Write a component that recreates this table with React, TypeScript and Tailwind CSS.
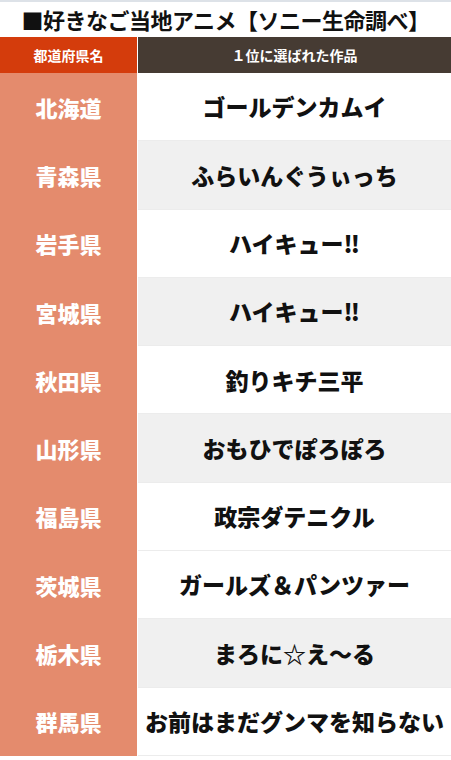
import React from "react";

const rows: [string, string, boolean][] = [
  ["北海道", "ゴールデンカムイ", false],
  ["青森県", "ふらいんぐうぃっち", true],
  ["岩手県", "ハイキュー‼", false],
  ["宮城県", "ハイキュー‼", true],
  ["秋田県", "釣りキチ三平", false],
  ["山形県", "おもひでぽろぽろ", true],
  ["福島県", "政宗ダテニクル", false],
  ["茨城県", "ガールズ＆パンツァー", false],
  ["栃木県", "まろに☆え〜る", true],
  ["群馬県", "お前はまだグンマを知らない", false],
];

export default function App() {
  return (
    <div
      className="w-[451px] h-[760px] bg-white overflow-hidden"
      style={{ fontFamily: '"Noto Sans CJK JP", "Noto Sans", sans-serif' }}
    >
      <div className="h-[2px] bg-[#dde2e8]" />
      <div className="h-[35px] flex items-center justify-center text-[22px] font-bold text-[#111] tracking-[-0.5px]">
        ■好きなご当地アニメ【ソニー生命調べ】
      </div>
      <div className="flex h-[36px]">
        <div className="w-[137px] bg-[#d43c0c] flex items-center justify-center text-white text-[14px] font-bold">
          都道府県名
        </div>
        <div className="w-[1px] bg-white" />
        <div className="flex-1 bg-[#463b33] flex items-center justify-center text-white text-[14px] font-bold">
          １位に選ばれた作品
        </div>
      </div>
      {rows.map(([pref, title, gray], i) => (
        <div key={i} className="flex h-[68.3px]">
          <div className="w-[137px] bg-[#e48b6d] flex items-center justify-center text-white text-[22px] font-black">
            {pref}
          </div>
          <div className="w-[1px] bg-white" />
          <div
            className={`flex-1 flex items-center justify-center text-[23px] font-black text-[#111] border-b border-[#ececec] ${
              gray ? "bg-[#f0f0f0]" : "bg-white"
            }`}
          >
            {title}
          </div>
        </div>
      ))}
    </div>
  );
}
